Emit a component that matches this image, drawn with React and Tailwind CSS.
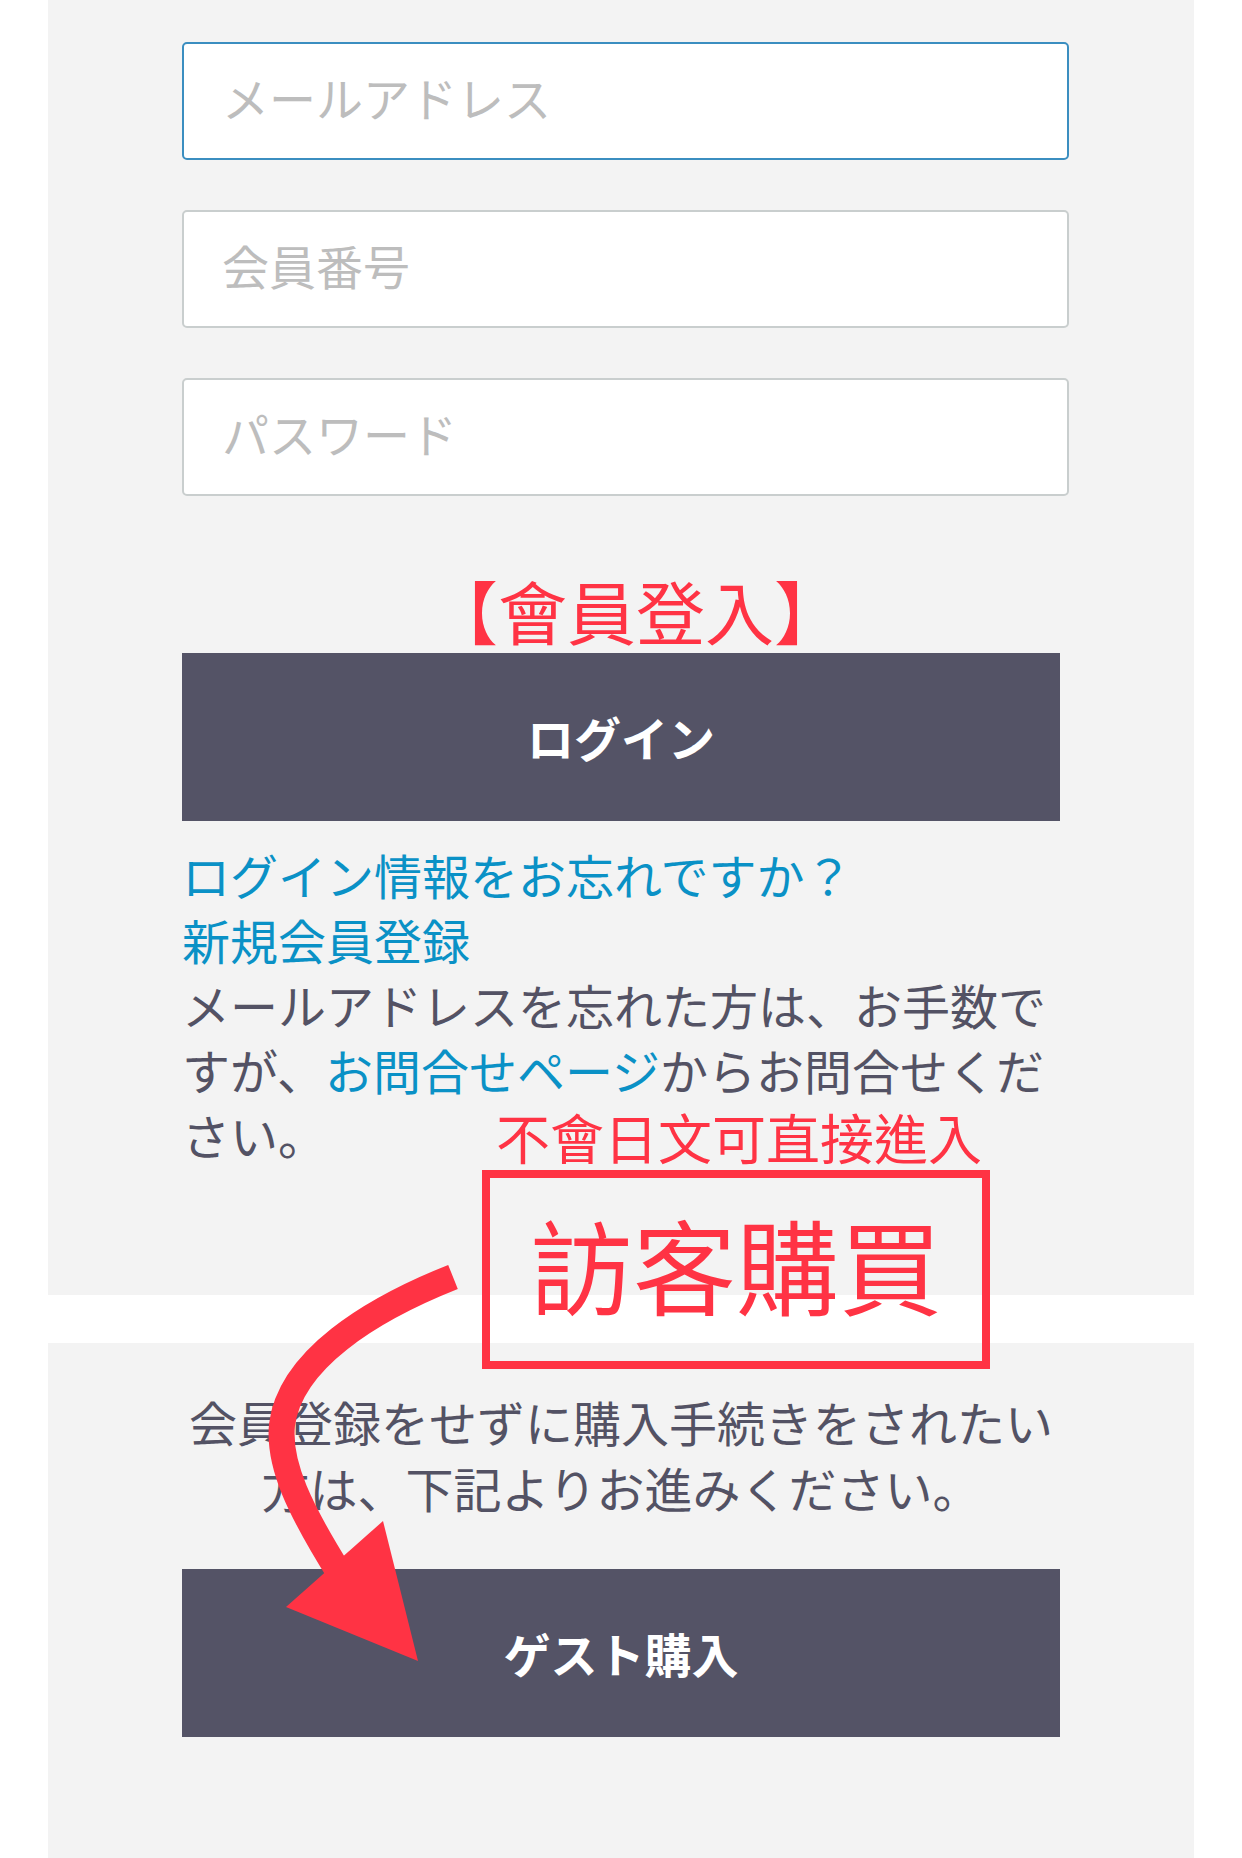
export default function App() {
  const inputBase =
    "block w-[887px] h-[118px] rounded-[5px] border-2 bg-white pl-[38px] pb-[10px] text-[47px] text-[#333] outline-none placeholder:text-[#bdbdbd]";
  return (
    <div className="relative w-[1242px] min-h-[1858px] overflow-hidden bg-white font-['Noto_Sans_CJK_JP','Noto_Sans_CJK_TC',sans-serif]">
      {/* Upper panel */}
      <div className="mx-[48px] h-[1295px] bg-[#f3f3f3] pl-[134px] pt-[42px]">
        <div className="flex flex-col gap-[50px]">
          <input readOnly className={inputBase + " border-[#3b8ec0]"} placeholder="メールアドレス" />
          <input readOnly className={inputBase + " border-[#c9cece]"} placeholder="会員番号" />
          <input readOnly className={inputBase + " border-[#c9cece]"} placeholder="パスワード" />
        </div>
        <div className="flex h-[157px] w-[878px] items-end justify-center pb-[8px] pl-[30px]">
          <span className="font-['Noto_Sans_CJK_TC',sans-serif] text-[69px] leading-none text-[#ff3344]">【會員登入】</span>
        </div>
        <button className="flex h-[168px] w-[878px] items-center justify-center bg-[#545366] text-[47px] font-bold text-white">
          ログイン
        </button>
        <div className="mt-[21px] w-[878px] text-[48px] leading-[65px] text-[#535264]">
          <a className="block text-[#0a91c6]">ログイン情報をお忘れですか？</a>
          <a className="block text-[#0a91c6]">新規会員登録</a>
          <p>
            メールアドレスを忘れた方は、お手数ですが、
            <span className="text-[#0a91c6]">お問合せページ</span>
            からお問合せください。
          </p>
        </div>
      </div>

      {/* Lower panel */}
      <div className="mx-[48px] mt-[48px] min-h-[515px] bg-[#f3f3f3] pl-[134px] pt-[45px]">
        <p className="w-[878px] text-center text-[48px] leading-[66px] text-[#535264]">
          会員登録をせずに購入手続きをされたい方は、下記よりお進みください。
        </p>
        <button className="mt-[49px] flex h-[168px] w-[878px] items-center justify-center bg-[#545366] text-[47px] font-bold text-white">
          ゲスト購入
        </button>
      </div>

      {/* Annotations */}
      <div className="absolute left-[496px] top-[1110px] font-['Noto_Sans_CJK_TC',sans-serif] text-[54px] leading-none text-[#ff3344]">
        不會日文可直接進入
      </div>
      <div className="absolute left-[482px] top-[1170px] flex h-[199px] w-[508px] items-center justify-center border-[8px] border-[#ff3344] pb-[12px]">
        <span className="font-['Noto_Sans_CJK_TC',sans-serif] text-[103px] leading-none text-[#ff3344]">訪客購買</span>
      </div>
      <svg
        className="pointer-events-none absolute left-0 top-0"
        width="1242"
        height="1858"
        viewBox="0 0 1242 1858"
      >
        <path
          d="M453 1277 C370 1310 290 1360 282 1425 C278 1465 300 1510 340 1574"
          fill="none"
          stroke="#ff3344"
          strokeWidth="26"
        />
        <polygon points="286,1607 383,1521 418,1661" fill="#ff3344" />
      </svg>
    </div>
  );
}
